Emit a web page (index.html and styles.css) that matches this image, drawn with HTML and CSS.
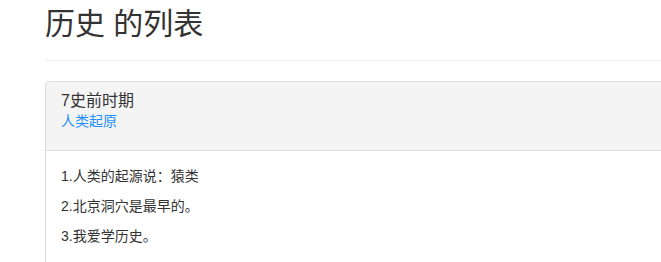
FILE: index.html
```html
<!DOCTYPE html>
<html lang="zh-CN">
<head>
<meta charset="utf-8">
<title>历史 的列表</title>
<link rel="stylesheet" href="styles.css">
</head>
<body>
<div class="container">
  <h1 class="page-header">历史 的列表</h1>
  <div class="panel">
    <div class="panel-heading">
      <div class="panel-title">7史前时期</div>
      <a class="panel-link" href="#">人类起原</a>
    </div>
    <div class="panel-body">
      <p>1.人类的起源说：猿类</p>
      <p>2.北京洞穴是最早的。</p>
      <p>3.我爱学历史。</p>
    </div>
  </div>
</div>
</body>
</html>
```
FILE: styles.css
```css
html, body {
  margin: 0;
  padding: 0;
  background: #fff;
  overflow: hidden;
}
body {
  font-family: "Liberation Sans", "Noto Sans CJK SC", sans-serif;
  font-size: 14px;
  line-height: 20px;
  color: #333;
}
.container {
  margin-left: 45px;
}
.page-header {
  margin: 7px 0 20px;
  padding-bottom: 20px;
  border-bottom: 1px solid #eee;
  font-size: 30px;
  font-weight: 400;
  line-height: 33px;
  color: #333;
}
.panel {
  border: 1px solid #ddd;
  border-right: 0;
  border-radius: 4px 0 0 4px;
  background: #fff;
}
.panel-heading {
  background: #f4f4f4;
  padding: 10px 15px 19px;
  border-bottom: 1px solid #ddd;
  border-radius: 3px 0 0 0;
}
.panel-title {
  font-size: 16px;
  line-height: 18px;
  color: #333;
}
.panel-link {
  display: block;
  margin-top: 1px;
  line-height: 20px;
  color: #1e90ff;
  text-decoration: none;
}
.panel-body {
  padding: 15px;
}
.panel-body p {
  margin: 0 0 10px;
}
```
